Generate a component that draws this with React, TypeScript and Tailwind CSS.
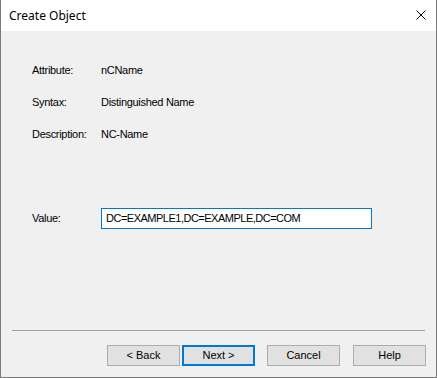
const font = { fontFamily: '"Liberation Sans", Arial, sans-serif' };

type RowProps = {
    label: string;
    value: string;
};

const InfoRow = ({ label, value }: RowProps) => (
    <div className="flex h-[32px] items-center text-[11px] tracking-[-0.3px] text-black">
        <span className="w-[69px]">{label}</span>
        <span>{value}</span>
    </div>
);

const DialogButton = ({
    label,
    primary,
    className,
}: {
    label: string;
    primary?: boolean;
    className?: string;
}) => (
    <button
        className={
            (primary
                ? "border-2 border-[#0078d7] "
                : "border border-[#adadad] ") +
            "h-[21px] w-[73px] bg-[#e1e1e1] text-[11px] leading-none text-black " +
            (className ?? "")
        }
    >
        {label}
    </button>
);

export default function App() {
    return (
        <div
            className="flex h-[378px] w-[437px] flex-col border-x border-b border-[#7a7a7a] bg-[#f0f0f0]"
            style={font}
        >
            {/* title bar */}
            <div className="flex h-[31px] items-center justify-between bg-white pl-[8px] pr-[10px]">
                <span
                    className="text-[12px] text-black"
                    style={{ fontFamily: '"Noto Sans", "Open Sans", sans-serif' }}
                >
                    Create Object
                </span>
                <svg width="10" height="10" viewBox="0 0 10 10" className="mt-[-1px]">
                    <path d="M0.5 0.5 L9.5 9.5 M9.5 0.5 L0.5 9.5" stroke="#000" strokeWidth="1" />
                </svg>
            </div>

            {/* body */}
            <div className="flex flex-1 flex-col pl-[31px] pt-[23px]">
                <InfoRow label="Attribute:" value="nCName" />
                <InfoRow label="Syntax:" value="Distinguished Name" />
                <InfoRow label="Description:" value="NC-Name" />

                <div className="mt-[58px] flex items-center text-[11px] tracking-[-0.3px] text-black">
                    <span className="w-[69px]">Value:</span>
                    <div className="flex h-[21px] w-[271px] items-center border border-[#0078d7] bg-white pl-[4px] tracking-[-0.5px]">
                        DC=EXAMPLE1,DC=EXAMPLE,DC=COM
                    </div>
                </div>
            </div>

            <div className="mx-[11px] h-px bg-[#a0a0a0]" />

            <div className="flex justify-end pr-[10px] pt-[14px] pb-[11px]">
                <DialogButton label="< Back" />
                <DialogButton label="Next >" primary className="ml-[2px]" />
                <DialogButton label="Cancel" className="ml-[12px]" />
                <DialogButton label="Help" className="ml-[13px]" />
            </div>
        </div>
    );
}
